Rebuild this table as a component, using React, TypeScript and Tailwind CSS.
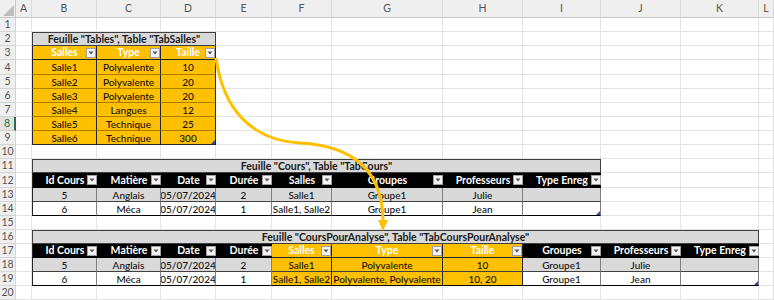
import React from "react";

const GRID =
  "grid grid-cols-[16px_16px_65px_64px_55px_56px_60px_111px_80px_78px_80px_78px_1fr]";

type Cell = { t?: string; span?: number; cls: string; dd?: boolean; corner?: boolean };

const SPAN: Record<number, string> = { 1: "", 3: "col-span-3", 8: "col-span-8", 10: "col-span-10" };

const E = "border-r border-b border-[#e3e3e3]";
const empty = (n: number): Cell[] => Array.from({ length: n }, () => ({ cls: E }));

const TITLE = "bg-[#d9d9d9] border border-[#404040] font-bold text-[10.5px] text-[#1a1a1a]";
const HO = "bg-[#ffc000] text-white font-bold text-[10.5px] border-r border-r-[#262626] border-b border-b-[#262626]";
const HB = "bg-black text-white font-bold text-[10.5px] border-b border-b-black";
const OD = "bg-[#ffc000] text-[#111111] font-medium border-r border-r-[#262626] border-b border-b-[#a87d00]";
const ODL = "bg-[#ffc000] text-[#111111] font-medium border-r border-r-[#262626] border-b border-b-[#262626]";
const GD = "bg-[#d9d9d9] text-[#111111] font-medium border-r border-r-[#808080] border-b border-b-[#404040]";
const WD = "bg-white text-[#111111] font-medium border-r border-r-[#808080] border-b border-b-black";
const OG = "bg-[#ffc000] text-[#111111] font-medium border-r border-r-[#262626] border-b border-b-[#404040]";
const OW = "bg-[#ffc000] text-[#111111] font-medium border-r border-r-[#262626] border-b border-b-black";
const LB = " border-l border-l-[#262626]";
const RB = " border-r-[#262626]";

const t1 = [
  ["Salle1", "Polyvalente", "10"],
  ["Salle2", "Polyvalente", "20"],
  ["Salle3", "Polyvalente", "20"],
  ["Salle4", "Langues", "12"],
  ["Salle5", "Technique", "25"],
  ["Salle6", "Technique", "300"],
];

const rows: { h: string; cells: Cell[] }[] = [];

rows.push({ h: "h-[14px]", cells: empty(12) });
rows.push({
  h: "h-[14px]",
  cells: [{ cls: E }, { t: 'Feuille "Tables", Table "TabSalles"', span: 3, cls: TITLE }, ...empty(8)],
});
rows.push({
  h: "h-[14px]",
  cells: [
    { cls: E },
    { t: "Salles", cls: HO + LB, dd: true },
    { t: "Type", cls: HO, dd: true },
    { t: "Taille", cls: HO, dd: true },
    ...empty(8),
  ],
});
const t1h = ["h-[15px]", "h-[14px]", "h-[14px]", "h-[14px]", "h-[14px]", "h-[14px]"];
t1.forEach((r, i) => {
  const c = i === t1.length - 1 ? ODL : OD;
  rows.push({
    h: t1h[i],
    cells: [
      { cls: E },
      { t: r[0], cls: c + LB },
      { t: r[1], cls: c },
      { t: r[2], cls: c, corner: i === t1.length - 1 },
      ...empty(8),
    ],
  });
});
rows.push({ h: "h-[14px]", cells: empty(12) });
rows.push({
  h: "h-[14px]",
  cells: [{ cls: E }, { t: 'Feuille "Cours", Table "TabCours"', span: 8, cls: TITLE }, ...empty(3)],
});
const h2 = ["Id Cours", "Matière", "Date", "Durée", "Salles", "Groupes", "Professeurs", "Type Enreg"];
rows.push({
  h: "h-[15px]",
  cells: [{ cls: E }, ...h2.map((t, i) => ({ t, cls: HB + (i === 0 ? LB : ""), dd: true })), ...empty(3)],
});
const d2 = [
  ["5", "Anglais", "05/07/2024", "2", "Salle1", "Groupe1", "Julie", ""],
  ["6", "Méca", "05/07/2024", "1", "Salle1, Salle2", "Groupe1", "Jean", ""],
];
d2.forEach((r, ri) => {
  const base = ri === 0 ? GD : WD;
  rows.push({
    h: "h-[14px]",
    cells: [
      { cls: E },
      ...r.map((t, i) => ({
        t,
        cls: base + (i === 0 ? LB : "") + (i === r.length - 1 ? RB : ""),
        corner: ri === 1 && i === r.length - 1,
      })),
      ...empty(3),
    ],
  });
});
rows.push({ h: "h-[14px]", cells: empty(12) });
rows.push({
  h: "h-[14px]",
  cells: [
    { cls: E },
    { t: 'Feuille "CoursPourAnalyse", Table "TabCoursPourAnalyse"', span: 10, cls: TITLE },
    { cls: E },
  ],
});
const h3 = ["Id Cours", "Matière", "Date", "Durée", "Salles", "Type", "Taille", "Groupes", "Professeurs", "Type Enreg"];
const isO = (i: number) => i >= 4 && i <= 6;
rows.push({
  h: "h-[14px]",
  cells: [
    { cls: E },
    ...h3.map((t, i) => ({ t, cls: (isO(i) ? HO : HB) + (i === 0 ? LB : ""), dd: true })),
    { cls: E },
  ],
});
const d3 = [
  ["5", "Anglais", "05/07/2024", "2", "Salle1", "Polyvalente", "10", "Groupe1", "Julie", ""],
  ["6", "Méca", "05/07/2024", "1", "Salle1, Salle2", "Polyvalente, Polyvalente", "10, 20", "Groupe1", "Jean", ""],
];
d3.forEach((r, ri) => {
  const base = ri === 0 ? GD : WD;
  const ob = ri === 0 ? OG : OW;
  rows.push({
    h: "h-[14px]",
    cells: [
      { cls: E },
      ...r.map((t, i) => ({
        t,
        cls:
          (isO(i) ? ob : base) +
          (i === 0 ? LB : "") +
          (i === 3 || i === r.length - 1 ? RB : ""),
        corner: ri === 1 && i === r.length - 1,
      })),
      { cls: E },
    ],
  });
});
rows.push({ h: "h-[14px]", cells: empty(12) });
rows.push({ h: "h-[14px]", cells: empty(12) });

const letters = ["A", "B", "C", "D", "E", "F", "G", "H", "I", "J", "K", "L"];

function Dropdown() {
  return (
    <span className="absolute right-0 top-1/2 -translate-y-1/2 w-[10px] h-[10px] bg-[#f4f4f4] border border-[#a0a0a0] flex items-center justify-center">
      <svg width="6" height="4" viewBox="0 0 6 4">
        <path d="M0.5 0.5 L5.5 0.5 L3 3.5Z" fill="#595959" />
      </svg>
    </span>
  );
}

function Corner() {
  return (
    <svg className="absolute right-0 bottom-0" width="4" height="4" viewBox="0 0 4 4">
      <polygon points="4,0 4,4 0,4" fill="#2b4c9b" />
    </svg>
  );
}

export default function App() {
  return (
    <div className="relative w-[774px] h-[300px] overflow-hidden bg-white font-['Lato',sans-serif] text-[10px] leading-none">
      <div className={GRID + " h-[18px]"}>
        <div className="relative bg-[#efefef] border-r border-b border-[#c8c8c8]">
          <svg className="absolute left-0 top-0" width="16" height="18" viewBox="0 0 16 18">
            <polygon points="14,5 14,16 3,16" fill="#bfbfbf" />
          </svg>
        </div>
        {letters.map((l) => (
          <div
            key={l}
            className="bg-[#efefef] border-r border-r-[#d9d9d9] border-b border-b-[#c8c8c8] flex items-center justify-center text-[#555555] text-[10.5px]"
          >
            {l}
          </div>
        ))}
      </div>
      {rows.map((r, ri) => {
        const n = ri + 1;
        const sel = n === 8;
        return (
          <div key={ri} className={GRID + " " + r.h}>
            <div
              className={
                sel
                  ? "bg-[#e1e1e1] border-b border-b-[#d4d4d4] border-r-2 border-r-[#217346] text-[#217346] flex items-center justify-center text-[10.5px]"
                  : "bg-[#efefef] border-r border-b border-[#d4d4d4] text-[#555555] flex items-center justify-center text-[10.5px]"
              }
            >
              {n}
            </div>
            {r.cells.map((c, ci) => (
              <div
                key={ci}
                className={
                  "relative flex items-center justify-center whitespace-nowrap overflow-hidden " +
                  (c.span ? SPAN[c.span] + " " : "") +
                  c.cls
                }
              >
                {c.t}
                {c.dd && <Dropdown />}
                {c.corner && <Corner />}
              </div>
            ))}
          </div>
        );
      })}
      <svg className="absolute left-0 top-0 pointer-events-none" width="774" height="300" viewBox="0 0 774 300">
        <path
          d="M216,58 C223,108 250,140 300,143 C355,146 383,172 383,222"
          fill="none"
          stroke="#ffc000"
          strokeWidth="3"
        />
        <polygon points="378,220 388,220 383,231" fill="#ffc000" />
      </svg>
    </div>
  );
}
